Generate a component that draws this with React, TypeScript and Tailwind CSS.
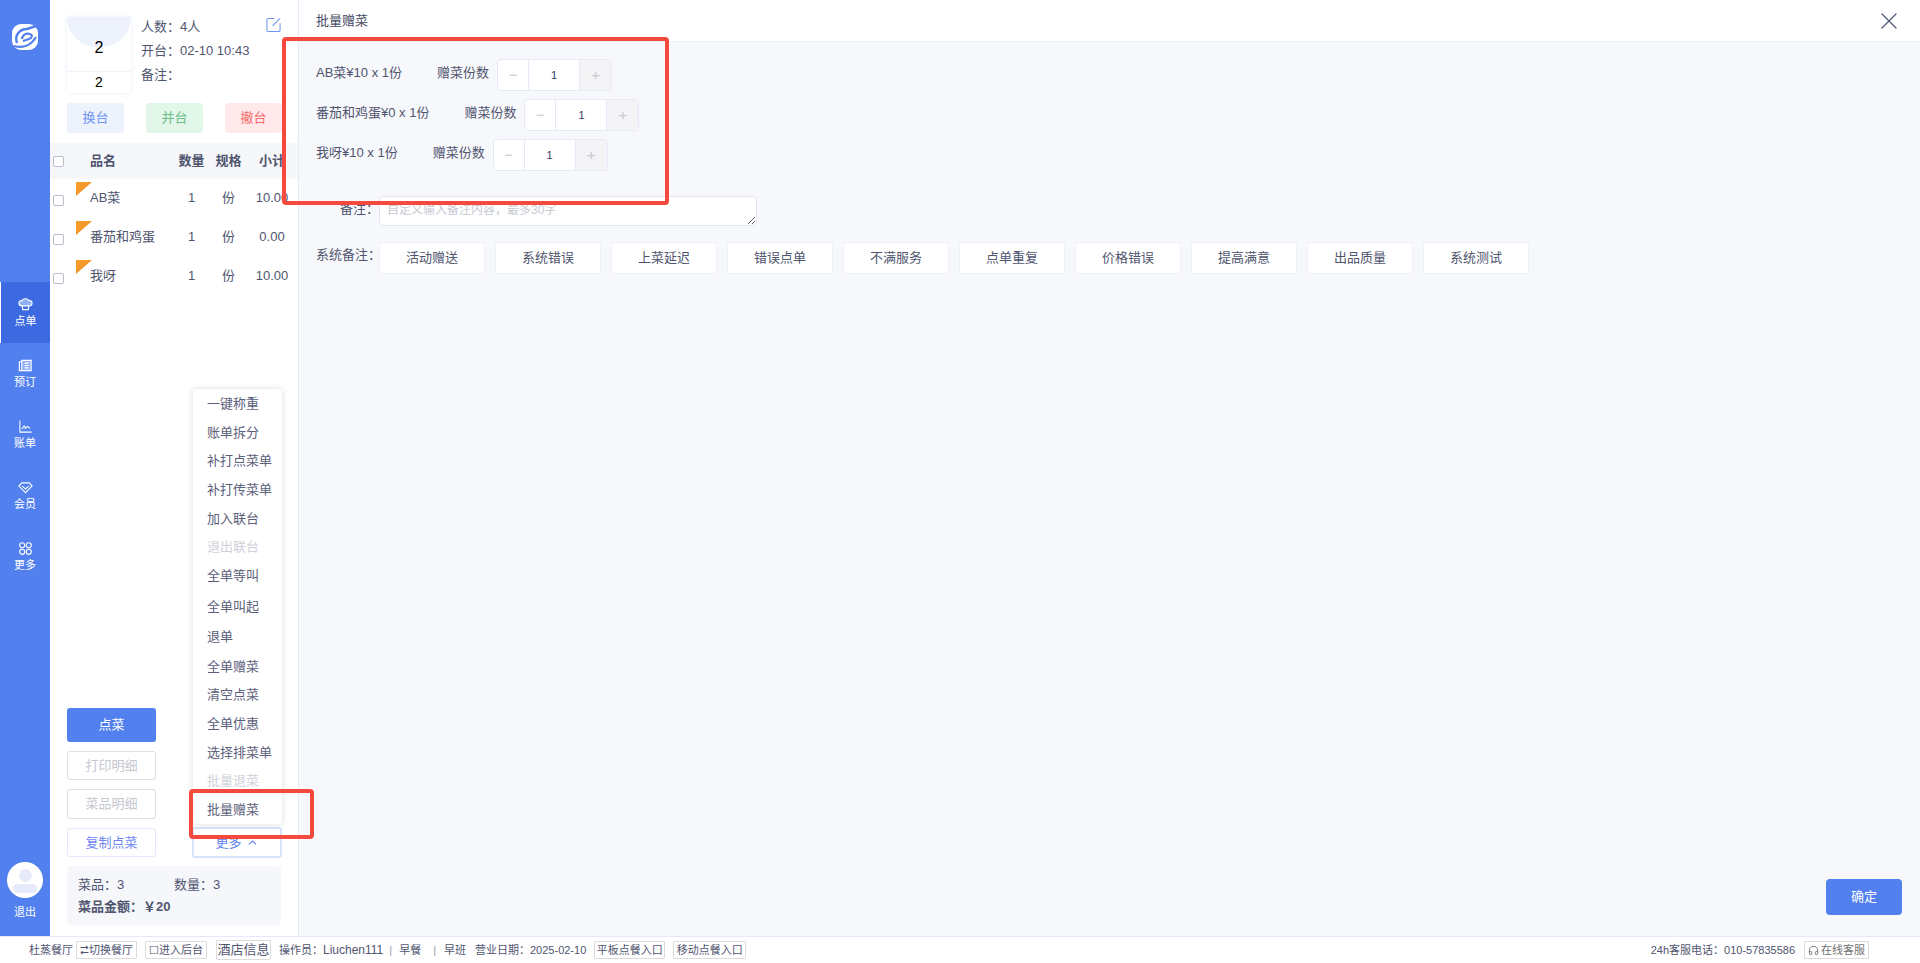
import React from 'react';
import { ChevronUp, Headphones, X } from 'lucide-react';

const FONT = 'font-["Liberation_Sans","Noto_Sans_CJK_SC",sans-serif]';

const dishes = [
  { name: 'AB菜', sub: '10.00', label: 'AB菜¥10 x 1份' },
  { name: '番茄和鸡蛋', sub: '0.00', label: '番茄和鸡蛋¥0 x 1份' },
  { name: '我呀', sub: '10.00', label: '我呀¥10 x 1份' },
];

const menuItems = [
  { text: '一键称重', h: 'h-[29px]' },
  { text: '账单拆分', h: 'h-[29px]' },
  { text: '补打点菜单', h: 'h-[28px]' },
  { text: '补打传菜单', h: 'h-[29px]' },
  { text: '加入联台', h: 'h-[29px]' },
  { text: '退出联台', h: 'h-[28px]', off: true },
  { text: '全单等叫', h: 'h-[30px]' },
  { text: '全单叫起', h: 'h-[31px]' },
  { text: '退单', h: 'h-[30px]' },
  { text: '全单赠菜', h: 'h-[29px]' },
  { text: '清空点菜', h: 'h-[28px]' },
  { text: '全单优惠', h: 'h-[29px]' },
  { text: '选择排菜单', h: 'h-[29px]' },
  { text: '批量退菜', h: 'h-[28px]', off: true },
  { text: '批量赠菜', h: 'h-[29px]' },
];

const remarks = ['活动赠送', '系统错误', '上菜延迟', '错误点单', '不满服务', '点单重复', '价格错误', '提高满意', '出品质量', '系统测试'];

const Logo = () => (
  <svg viewBox="0 0 28 28" className="w-[28px] h-[28px]" fill="none">
    <rect x="1" y="1" width="26" height="26" rx="9" fill="#fff" />
    <path d="M6 20C3 12 9 6 16 6l9-3" stroke="#5280ee" strokeWidth="2.400" />
    <path d="M11 16c0-4 4-6 8-5 3 1 2 4-1 5l-6 2" stroke="#5280ee" strokeWidth="2.200" />
    <path d="M3 23c7 2 16 1 22-9" stroke="#5280ee" strokeWidth="2.200" />
  </svg>
);

const ChefIcon = () => (
  <svg viewBox="0 0 16 16" className="w-[15px] h-[15px]" fill="none" stroke="#fff" strokeWidth="1.200">
    <path d="M4.500 9.500C2.500 9.500 1 8 1 6.300 1 4.500 2.800 3.300 4.500 3.800 5 2.300 6.500 1.800 8 1.800s3 .5 3.500 2c1.700-.5 3.500.7 3.500 2.500 0 1.700-1.500 3.200-3.500 3.200z" fill="#8fb0f5" />
    <path d="M4.500 9.500 5 13.500h6l.5-4" />
  </svg>
);
const BookIcon = () => (
  <svg viewBox="0 0 16 16" className="w-[15px] h-[15px]" fill="none" stroke="#fff" strokeWidth="1.200">
    <path d="M4 2.500h10v11H4z" fill="#8fb0f5" />
    <path d="M4 4H1.500v9.500H4M7 5.500h4.500M7 8h4.500M7 10.500h4.500" />
  </svg>
);
const ChartIcon = () => (
  <svg viewBox="0 0 16 16" className="w-[15px] h-[15px]" fill="none" stroke="#fff" strokeWidth="1.100">
    <path d="M2 1.500V14h12.500" />
    <path d="M4 11l2.500-3.500L8 10l2-2 3 2" />
  </svg>
);
const GemIcon = () => (
  <svg viewBox="0 0 16 16" className="w-[15px] h-[15px]" fill="none" stroke="#fff" strokeWidth="1.200">
    <path d="M4 3h8l3 3.500L8 13.500 1 6.500z" />
    <path d="M4.500 6.500 8 9.500l3.500-3" />
  </svg>
);
const GridIcon = () => (
  <svg viewBox="0 0 16 16" className="w-[15px] h-[15px]" fill="none" stroke="#fff" strokeWidth="1.200">
    <circle cx="4.500" cy="4.500" r="2.700" />
    <circle cx="11.500" cy="4.500" r="2.700" />
    <circle cx="4.500" cy="11.500" r="2.700" />
    <circle cx="11.500" cy="11.500" r="2.700" />
  </svg>
);
const EditIcon = () => (
  <svg viewBox="0 0 16 16" className="w-[15px] h-[16px]" fill="none" stroke="#6f96f2" strokeWidth="1.100">
    <path d="M9 1H2.500A1.500 1.500 0 0 0 1 2.500v11A1.500 1.500 0 0 0 2.500 15h11a1.500 1.500 0 0 0 1.500-1.500V6" />
    <path d="M7 9 15 1" />
  </svg>
);

const navItems = [
  { label: '点单', icon: <ChefIcon />, active: true },
  { label: '预订', icon: <BookIcon /> },
  { label: '账单', icon: <ChartIcon /> },
  { label: '会员', icon: <GemIcon /> },
  { label: '更多', icon: <GridIcon /> },
];

const Sidebar = () => (
  <aside className="w-[50px] shrink-0 bg-[#5280ee] flex flex-col text-white text-[11px]">
    <div className="flex justify-center pt-[23px] h-[282px]">
      <Logo />
    </div>
    {navItems.map((item) => (
      <div
        key={item.label}
        className={`h-[61px] flex flex-col items-center justify-center gap-[2px] ${item.active ? 'bg-[#3d6ae0] border-l border-white' : ''}`}
      >
        {item.icon}
        <span className="leading-[14px]">{item.label}</span>
      </div>
    ))}
    <div className="mt-auto flex flex-col items-center pb-[17px]">
      <div className="w-[36px] h-[36px] rounded-full bg-white overflow-hidden flex flex-col items-center">
        <div className="w-[13px] h-[13px] rounded-full bg-[#e6eafa] mt-[7px]" />
        <div className="w-[24px] h-[9px] rounded-full bg-[#e6eafa] mt-[2px]" />
      </div>
      <span className="mt-[7px] leading-[14px]">退出</span>
    </div>
  </aside>
);

const Checkbox = () => <span className="w-[11px] h-[11px] rounded-[2px] border border-[#b9bccb] bg-white block" />;

const OrderPanel = () => (
  <section className="w-[249px] shrink-0 border-r border-[#e6e9f8] bg-white relative flex flex-col text-[#50556f] text-[13px] overflow-hidden">
    <div className="pl-[17px] pt-[17px] flex gap-[10px]">
      <div className="w-[64px] h-[76px] rounded-[4px] shadow-[0_0_4px_rgba(90,110,200,0.12)] bg-white text-black relative flex flex-col">
        <div className="absolute left-0 top-0 w-[64px] h-[30px] bg-[#eef2fd] rounded-b-[32px]" />
        <div className="relative h-[55px] border-b border-[#eef2fd] flex items-center justify-center pt-[8px] text-[16px]">2</div>
        <div className="relative flex-1 flex items-center justify-center text-[14px]">2</div>
      </div>
      <div className="flex-1 pr-[17px] relative leading-[24px] -mt-[2px]">
        <div>人数：4人</div>
        <div>开台：02-10 10:43</div>
        <div>备注：</div>
        <span className="absolute right-[17px] top-[2px]"><EditIcon /></span>
      </div>
    </div>
    <div className="pl-[17px] mt-[10px] flex gap-[22px] text-[13px]">
      <button className="w-[57px] h-[30px] rounded-[3px] bg-[#eef2fd] text-[#6f96f2]">换台</button>
      <button className="w-[57px] h-[30px] rounded-[3px] bg-[#e3f6ea] text-[#6cbf86]">并台</button>
      <button className="w-[57px] h-[30px] rounded-[3px] bg-[#ffe9ea] text-[#f56c6c] shrink-0">撤台</button>
    </div>
    <div className="mt-[10px] h-[36px] bg-[#f6f7fb] flex items-center font-bold">
      <span className="w-[40px] pl-[3px]"><Checkbox /></span>
      <span className="w-[83px]">品名</span>
      <span className="w-[37px] text-center">数量</span>
      <span className="w-[37px] text-center">规格</span>
      <span className="w-[50px] text-center shrink-0">小计</span>
    </div>
    {dishes.map((d) => (
      <div key={d.name} className="relative flex items-center h-[39px] pb-[2px]">
        <span className="absolute left-[26px] top-[3px] w-[16px] h-[14px] bg-gradient-to-br from-[#f7a12d] to-[#f08a24] [clip-path:polygon(0_0,100%_0,0_100%)]" />
        <span className="w-[40px] pl-[3px] pt-[5px]"><Checkbox /></span>
        <span className="w-[83px] whitespace-nowrap">{d.name}</span>
        <span className="w-[37px] text-center">1</span>
        <span className="w-[37px] text-center">份</span>
        <span className="w-[50px] text-center shrink-0">{d.sub}</span>
      </div>
    ))}

    <div className="mt-auto pl-[17px] pb-[11px] relative">
      <div className="grid grid-cols-[89px_90px] gap-x-[36px] text-[13px]">
        <button className="col-span-2 w-[89px] h-[34px] rounded-[3px] bg-[#5280ee] text-white">点菜</button>
        <button className="mt-[9px] w-[89px] h-[29px] rounded-[3px] border border-[#dcdfe6] text-[#c5c8d0]">打印明细</button>
        <span />
        <button className="mt-[9px] w-[89px] h-[30px] rounded-[3px] border border-[#dcdfe6] text-[#c5c8d0]">菜品明细</button>
        <span />
        <button className="mt-[9px] w-[89px] h-[29px] rounded-[3px] border border-[#e3e7f8] text-[#6f86f2]">复制点菜</button>
        <button className="mt-[8px] w-[90px] h-[31px] rounded-[3px] border-2 border-[#d8e4fb] text-[#5f86f0] flex items-center justify-center gap-[4px]">
          更多 <ChevronUp className="w-[13px] h-[13px]" />
        </button>
      </div>
      <div className="mt-[8px] w-[214px] h-[59px] rounded-[4px] bg-[#f6f7fb] px-[11px] pt-[8px] leading-[22px]">
        <div className="flex">
          <span className="w-[96px]">菜品：3</span>
          <span>数量：3</span>
        </div>
        <div className="font-bold">菜品金额：￥20</div>
      </div>

      <div className="absolute left-[143px] bottom-[112px] w-[89px] rounded-[4px] bg-white shadow-[0_0_6px_rgba(0,0,0,0.15)] z-10">
        {menuItems.map((m) => (
          <div key={m.text} className={`${m.h} pl-[14px] flex items-center whitespace-nowrap ${m.off ? 'text-[#cfd1d8]' : 'text-[#5c617b]'}`}>
            {m.text}
          </div>
        ))}
      </div>
    </div>
  </section>
);

const Stepper = () => (
  <div className="ml-[8px] h-[32px] w-[115px] flex rounded-[4px] border border-[#e6e9f8] bg-white text-[#c8cad2] shrink-0">
    <span className="w-[31px] flex items-center justify-center border-r border-[#e6e9f8] text-[15px]">−</span>
    <span className="flex-1 flex items-center justify-center text-[#303a60] text-[11px]">1</span>
    <span className="w-[32px] flex items-center justify-center border-l border-[#e6e9f8] bg-[#f4f4f6] rounded-r-[4px] text-[15px]">+</span>
  </div>
);

const MainPanel = () => (
  <main className="flex-1 min-w-0 bg-[#f7f8fb] flex flex-col text-[#50556f] text-[13px]">
    <header className="h-[42px] shrink-0 bg-white border-b border-[#eef0f8] flex items-center justify-between pl-[17px] pr-[17px]">
      <span className="text-[#454a63]">批量赠菜</span>
      <X className="w-[28px] h-[28px] text-[#50587a]" strokeWidth={1.100} />
    </header>
    <div className="pt-[17px] pl-[17px] flex flex-col gap-[8px]">
      {dishes.map((d) => (
        <div key={d.name} className="flex items-center h-[32px]">
          <span className="whitespace-nowrap -mt-[4px]">{d.label}</span>
          <span className="ml-[35px] whitespace-nowrap -mt-[4px]">赠菜份数</span>
          <Stepper />
        </div>
      ))}
    </div>
    <div className="mt-[25px] flex items-start">
      <span className="w-[80px] shrink-0 text-right leading-[26px]">备注：</span>
      <textarea
        rows={1}
        placeholder="自定义输入备注内容，最多30字"
        className="w-[378px] h-[30px] rounded-[4px] border border-[#e3e6f2] bg-white px-[7px] py-[3px] text-[12px] leading-[21px] outline-none placeholder:text-[#c8cad2]"
      />
    </div>
    <div className="mt-[16px] pl-[17px] flex items-start">
      <span className="w-[63px] shrink-0 leading-[26px] whitespace-nowrap">系统备注：</span>
      <div className="flex gap-[10px]">
        {remarks.map((r) => (
          <div key={r} className="w-[106px] h-[32px] rounded-[3px] border border-[#eef0f8] bg-white flex items-center justify-center">
            {r}
          </div>
        ))}
      </div>
    </div>
    <div className="mt-auto flex justify-end pr-[18px] pb-[21px]">
      <button className="w-[76px] h-[36px] rounded-[4px] bg-[#5280ee] text-white">确定</button>
    </div>
  </main>
);

const FootBtn = ({ children, cls = '' }: { children: React.ReactNode; cls?: string }) => (
  <span className={`h-[18px] flex items-center px-[2px] border border-[#dcdcdc] rounded-[1px] whitespace-nowrap ${cls}`}>{children}</span>
);

const Footer = () => (
  <footer className="h-[27px] shrink-0 bg-white border-t border-[#e6e9f8] flex items-center pl-[29px] pr-[51px] text-[11px] text-[#50556f] whitespace-nowrap">
    <span>杜蒸餐厅</span>
    <FootBtn cls="ml-[3px] w-[61px] justify-center">⮂切换餐厅</FootBtn>
    <FootBtn cls="ml-[8px] w-[62px] justify-center">☐进入后台</FootBtn>
    <FootBtn cls="ml-[9px] w-[55px] justify-center text-[13px] h-[20px]">酒店信息</FootBtn>
    <span className="ml-[8px]">操作员：<span className="text-[12px]">Liuchen111</span></span>
    <span className="ml-[6px] text-[#9a9db0]">|</span>
    <span className="ml-[7px]">早餐</span>
    <span className="ml-[12px] text-[#9a9db0]">|</span>
    <span className="ml-[8px]">早班</span>
    <span className="ml-[9px]">营业日期：2025-02-10</span>
    <FootBtn cls="ml-[8px] w-[71px] justify-center">平板点餐入口</FootBtn>
    <FootBtn cls="ml-[8px] w-[73px] justify-center">移动点餐入口</FootBtn>
    <span className="ml-auto">24h客服电话：010-57835586</span>
    <FootBtn cls="ml-[9px] w-[65px] justify-center gap-[2px] text-[#707070]">
      <Headphones className="w-[11px] h-[11px]" />在线客服
    </FootBtn>
  </footer>
);

export default function App() {
  return (
    <div className={`relative w-full h-screen overflow-hidden flex flex-col bg-white ${FONT}`}>
      <div className="flex-1 min-h-0 flex">
        <Sidebar />
        <OrderPanel />
        <MainPanel />
      </div>
      <Footer />
      {/* annotation boxes drawn over the screenshot */}
      <div className="absolute left-[282px] top-[37px] w-[387px] h-[168px] rounded-[4px] border-[4px] border-[#f5493d] pointer-events-none z-20" />
      <div className="absolute left-[189px] top-[789px] w-[125px] h-[50px] rounded-[4px] border-[4px] border-[#f5493d] pointer-events-none z-20" />
    </div>
  );
}
